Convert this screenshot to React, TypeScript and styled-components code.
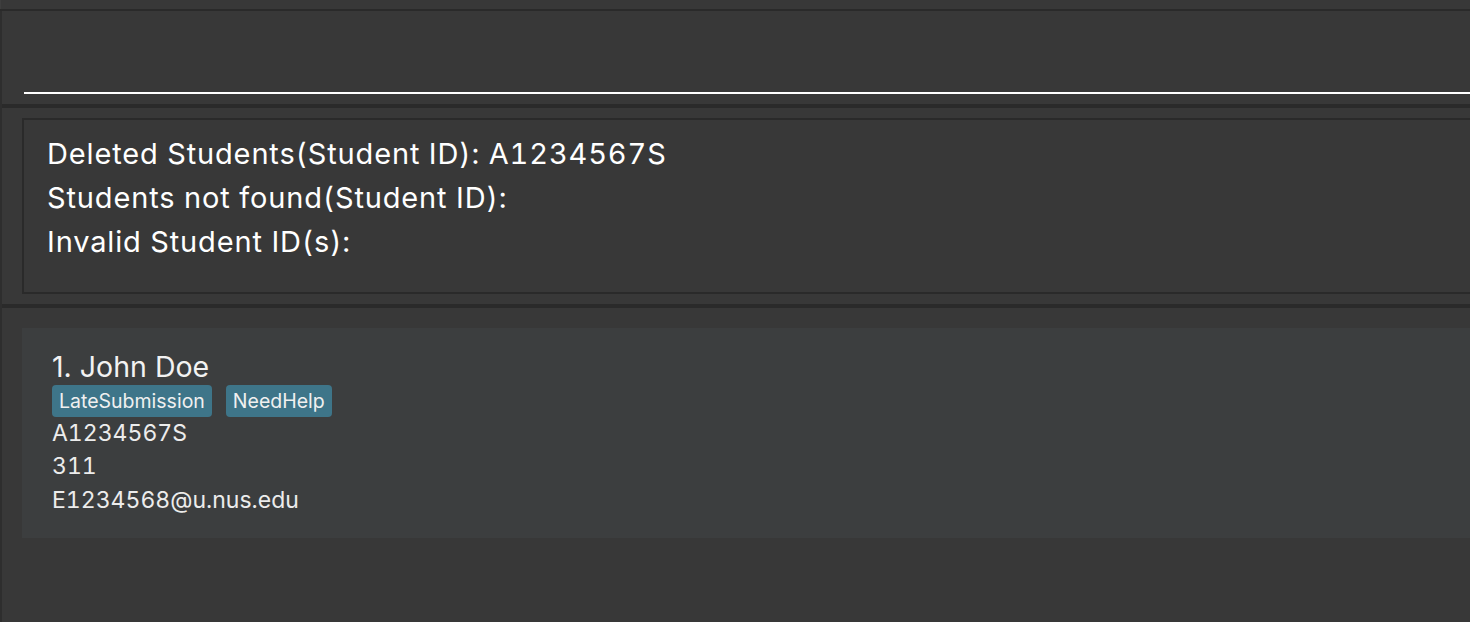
import React from "react";
import styled, { createGlobalStyle } from "styled-components";

const Global = createGlobalStyle`
  html, body { margin: 0; padding: 0; background: #383838; }
  body { font-family: Inter, "Open Sans", sans-serif; color: #ffffff; font-feature-settings: "tnum" 1; font-variant-numeric: tabular-nums; }
  * { box-sizing: border-box; }
`;

const Window = styled.div`
  width: 1470px;
  height: 622px;
  display: flex;
  flex-direction: column;
  background: #383838;
  overflow: hidden;
`;

const TopStrip = styled.div`
  height: 9px;
  flex: none;
  border-left: 1px solid #3e3e3e;
`;

const Divider = styled.div<{ $h: number }>`
  height: ${(p) => p.$h}px;
  flex: none;
  background: #2a2a2a;
`;

const Main = styled.div`
  flex: 1;
  display: flex;
  flex-direction: column;
  border-left: 2px solid #2e2e2e;
`;

const CommandArea = styled.div`
  height: 93px;
  flex: none;
  display: flex;
  align-items: flex-end;
  padding: 0 0 10px 22px;
`;

const CommandField = styled.div`
  flex: 1;
  height: 2px;
  background: #ffffff;
`;

const ResultArea = styled.div`
  height: 196px;
  flex: none;
  padding: 10px 0 0 20px;
`;

const ResultBox = styled.div`
  height: 176px;
  margin-right: -20px;
  border: 2px solid #2a2a2a;
  padding: 12px 0 0 23px;
  font-size: 29px;
  line-height: 44px;
  letter-spacing: 0.85px;
  color: #ffffff;
  white-space: pre;
`;

const ListArea = styled.div`
  flex: 1;
  padding: 20px 0 0 20px;
`;

const Card = styled.div`
  margin-right: -20px;
  background: #3c3e3f;
  padding: 21px 0 21px 30px;
`;

const Name = styled.div`
  font-size: 28.5px;
  line-height: 36px;
  color: #f2f2f2;
  font-feature-settings: "tnum" 0;
  font-variant-numeric: normal;
`;

const Tags = styled.div`
  display: flex;
  gap: 14px;
`;

const Tag = styled.span`
  height: 32px;
  display: inline-flex;
  align-items: center;
  padding: 0 7px;
  border-radius: 4px;
  background: #3e7589;
  color: #f0f0f0;
  font-size: 19.5px;
`;

const Detail = styled.div`
  font-size: 23px;
  line-height: 33.3px;
  color: #ececec;
`;

export default function App() {
  return (
    <Window>
      <Global />
      <TopStrip />
      <Divider $h={2} />
      <Main>
        <CommandArea>
          <CommandField />
        </CommandArea>
        <Divider $h={4} />
        <ResultArea>
          <ResultBox>
            <div>Deleted Students(Student ID): A1234567S</div>
            <div>Students not found(Student ID): </div>
            <div>Invalid Student ID(s): </div>
          </ResultBox>
        </ResultArea>
        <Divider $h={4} />
        <ListArea>
          <Card>
            <Name>1. John Doe</Name>
            <Tags>
              <Tag>LateSubmission</Tag>
              <Tag>NeedHelp</Tag>
            </Tags>
            <Detail>A1234567S</Detail>
            <Detail>311</Detail>
            <Detail>E1234568@u.nus.edu</Detail>
          </Card>
        </ListArea>
      </Main>
    </Window>
  );
}
